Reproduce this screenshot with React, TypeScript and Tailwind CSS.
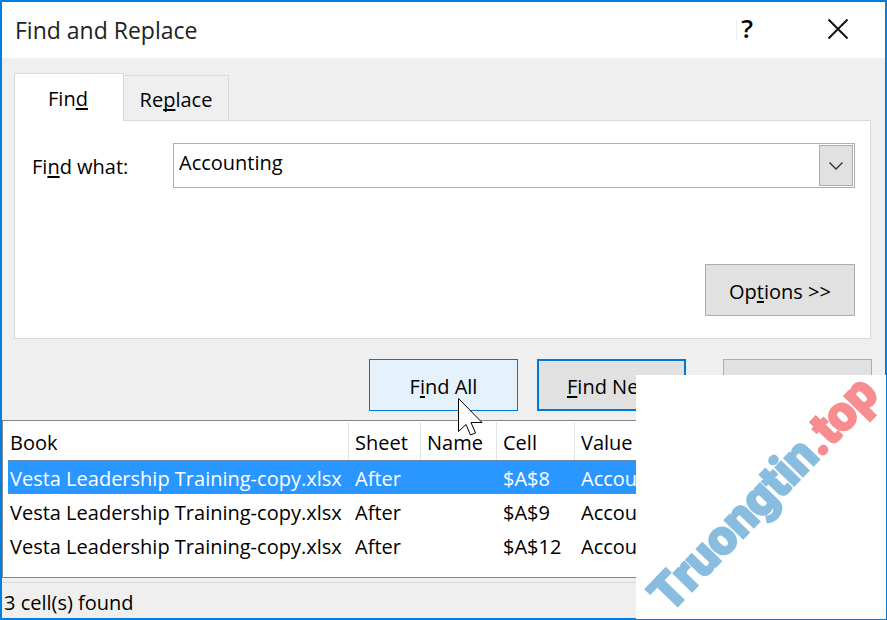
import { useState } from 'react';
import type { ReactNode } from 'react';

interface Match {
  book: string;
  sheet: string;
  name: string;
  cell: string;
  value: string;
}

const matches: Match[] = [
  { book: 'Vesta Leadership Training-copy.xlsx', sheet: 'After', name: '', cell: '$A$8', value: 'Accounting' },
  { book: 'Vesta Leadership Training-copy.xlsx', sheet: 'After', name: '', cell: '$A$9', value: 'Accounting' },
  { book: 'Vesta Leadership Training-copy.xlsx', sheet: 'After', name: '', cell: '$A$12', value: 'Accounting' },
];

// Underlined access key inside a label
function Key({ children }: { children: ReactNode }) {
  return (
    <span className="underline decoration-2 underline-offset-2 [text-decoration-skip-ink:none]">{children}</span>
  );
}

function Pointer() {
  return (
    <svg className="pointer-events-none absolute left-[88px] top-[38px] z-10" width="28" height="42" viewBox="0 0 28 42">
      <path
        d="M1.5 1.5V34.5L9 27.5L13.5 38L18.5 36L14 25.5H25Z"
        fill="#ffffff"
        stroke="#000000"
        strokeWidth="1"
      />
    </svg>
  );
}

function Watermark() {
  return (
    <div className="pointer-events-none absolute -bottom-px -right-px h-[244px] w-[250px] bg-white">
      <svg className="overflow-visible" width="250" height="244" viewBox="0 0 250 244">
        <text
          transform="translate(34 239) rotate(-46)"
          fontSize="49"
          fontWeight="900"
          strokeWidth="2"
          className="font-['Roboto','Liberation_Sans',sans-serif]"
        >
          <tspan fill="#89bde0" stroke="#89bde0">Truongtin</tspan>
          <tspan fill="#f78d90" stroke="#f78d90">.top</tspan>
        </text>
      </svg>
    </div>
  );
}

export default function App() {
  const [query, setQuery] = useState('Accounting');
  const [selected, setSelected] = useState(0);

  return (
    <div
      role="dialog"
      aria-labelledby="dialog-title"
      className="relative flex min-h-screen w-full flex-col border-2 border-[#0080dc] bg-[#efefef] font-['Open_Sans','Noto_Sans',sans-serif] text-[20px] leading-7 text-black"
    >
      <header className="flex h-14 items-center bg-white pl-[13px] pr-9">
        <h1 id="dialog-title" className="flex-1 text-[23px] text-[#222222]">
          Find and Replace
        </h1>
        <button
          type="button"
          aria-label="Help"
          className="mr-[74px] flex h-5 items-center border-l border-[#eeeeee] pb-1 pl-1 text-[26px] font-semibold leading-5"
        >
          ?
        </button>
        <button type="button" aria-label="Close dialog" className="pb-0.5">
          <svg width="22" height="22" viewBox="0 0 22 22" fill="none" stroke="#111111" strokeWidth="2">
            <path d="M1.5 1.5L20.5 20.5M20.5 1.5L1.5 20.5" />
          </svg>
        </button>
      </header>

      <main className="pl-3 pr-[14px] pt-[15px]">
        <div role="tablist" className="flex items-end">
          <button
            type="button"
            role="tab"
            aria-selected="true"
            className="relative z-10 -mb-px h-12 w-[110px] border border-b-0 border-[#d9d9d9] bg-white pr-0.5 pt-0.5"
          >
            Fin<Key>d</Key>
          </button>
          <button
            type="button"
            role="tab"
            aria-selected="false"
            className="h-[45px] w-[105px] border border-b-0 border-l-0 border-[#d9d9d9] bg-[#efefef] pt-1"
          >
            Re<Key>p</Key>lace
          </button>
        </div>

        <section role="tabpanel" className="border border-[#d9d9d9] bg-white pb-[22px] pl-[17px] pr-[15px] pt-[22px]">
          <div className="flex items-center">
            <label htmlFor="find-what" className="w-[141px] shrink-0 pt-0.5">
              Fi<Key>n</Key>d what:
            </label>
            <div className="flex h-[45px] min-w-0 flex-1 border border-[#abadb3] p-px">
              <input
                id="find-what"
                type="text"
                value={query}
                onChange={(e) => setQuery(e.target.value)}
                className="min-w-0 flex-1 bg-white pb-1.5 pl-1 outline-none"
              />
              <button
                type="button"
                aria-label="Recent searches"
                className="flex w-[34px] items-center justify-center border border-[#adadad] bg-[#e1e1e1]"
              >
                <svg width="14" height="8" viewBox="0 0 14 8" fill="none" stroke="#333333" strokeWidth="1.4">
                  <path d="M0.5 0.5L7 7L13.5 0.5" />
                </svg>
              </button>
            </div>
          </div>
          <div className="mt-[76px] flex justify-end">
            <button type="button" className="h-[52px] w-[150px] border border-[#adadad] bg-[#e1e1e1] pt-1">
              Op<Key>t</Key>ions &gt;&gt;
            </button>
          </div>
        </section>

        <div className="-mr-px mt-5 flex justify-end">
          <div className="relative mr-[19px]">
            <button type="button" className="h-[52px] w-[149px] border border-[#0078d7] bg-[#e5f1fb] pt-1">
              F<Key>i</Key>nd All
            </button>
            <Pointer />
          </div>
          <button type="button" className="mr-[37px] h-[52px] w-[149px] border-2 border-[#0078d7] bg-[#e1e1e1] pt-1">
            <Key>F</Key>ind Next
          </button>
          <button type="button" className="h-[52px] w-[149px] border border-[#adadad] bg-[#e1e1e1] pt-1">
            Close
          </button>
        </div>
      </main>

      <div className="mt-[9px] h-[158px] border border-r-0 border-[#828790] bg-white pl-[5px] pt-px">
        <table className="w-full table-fixed border-separate border-spacing-0 text-left">
          <colgroup>
            <col className="w-[341px]" />
            <col className="w-[72px]" />
            <col className="w-[76px]" />
            <col className="w-[78px]" />
            <col />
          </colgroup>
          <thead>
            <tr className="h-[38px] *:border-r *:border-[#e2e2e2] *:pl-[6px] *:pt-1 *:font-normal">
              <th className="pl-[2px]!">Book</th>
              <th>Sheet</th>
              <th>Name</th>
              <th>Cell</th>
              <th>Value</th>
            </tr>
          </thead>
          <tbody>
            {matches.map((match, i) => (
              <tr
                key={match.cell}
                onClick={() => setSelected(i)}
                className={`h-[34px] whitespace-nowrap *:border-y *:border-dotted *:pl-[6px] *:pt-1 ${
                  i === selected ? 'bg-[#2a96ff] text-white *:border-[#6f8bab]' : '*:border-transparent'
                }`}
              >
                <td className="pl-[2px]!">{match.book}</td>
                <td>{match.sheet}</td>
                <td>{match.name}</td>
                <td>{match.cell}</td>
                <td>{match.value}</td>
              </tr>
            ))}
          </tbody>
        </table>
      </div>

      <footer className="mt-1 flex-1 border-t border-[#d7d7d7] pl-[2px] pt-[6px]">3 cell(s) found</footer>

      <Watermark />
    </div>
  );
}
